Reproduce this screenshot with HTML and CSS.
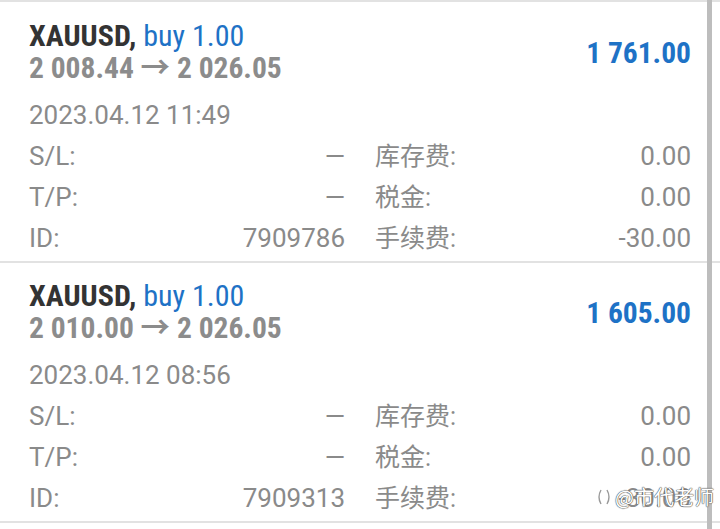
FILE: index.html
```html
<!DOCTYPE html>
<html lang="zh">
<head>
  <meta charset="UTF-8" />
  <meta name="viewport" content="width=device-width, initial-scale=1.0" />
  <title>Положення</title>
  <link rel="stylesheet" href="styles.css">
</head>
<body>
  <div class="list">
    <div class="deal">
      <div class="head">
        <div class="info">
          <div class="title">XAUUSD, <span class="side">buy 1.00</span></div>
          <div class="prices">2 008.44 → 2 026.05</div>
        </div>
        <div class="profit">1 761.00</div>
      </div>
      <div class="date">2023.04.12 11:49</div>
      <div class="grid">
        <div class="row"><span>S/L:</span><span>—</span></div>
        <div class="row"><span class="cn">库存费:</span><span>0.00</span></div>
        <div class="row"><span>T/P:</span><span>—</span></div>
        <div class="row"><span class="cn">税金:</span><span>0.00</span></div>
        <div class="row"><span>ID:</span><span>7909786</span></div>
        <div class="row"><span class="cn">手续费:</span><span>-30.00</span></div>
      </div>
    </div>
    <div class="deal">
      <div class="head">
        <div class="info">
          <div class="title">XAUUSD, <span class="side">buy 1.00</span></div>
          <div class="prices">2 010.00 → 2 026.05</div>
        </div>
        <div class="profit">1 605.00</div>
      </div>
      <div class="date">2023.04.12 08:56</div>
      <div class="grid">
        <div class="row"><span>S/L:</span><span>—</span></div>
        <div class="row"><span class="cn">库存费:</span><span>0.00</span></div>
        <div class="row"><span>T/P:</span><span>—</span></div>
        <div class="row"><span class="cn">税金:</span><span>0.00</span></div>
        <div class="row"><span>ID:</span><span>7909313</span></div>
        <div class="row"><span class="cn">手续费:</span><span>-30.00</span></div>
      </div>
    </div>
  </div>

  <div class="scrollbar"></div>

  <div class="mark">
    <svg width="16" height="18" viewBox="0 0 16 18"><path d="M5 2 Q1 9 5 16 M11 2 Q15 9 11 16" fill="none" stroke="#999" stroke-width="1.4"/></svg>
    <span>@市代老师</span>
  </div>
</body>
</html>
```

FILE: styles.css
```css
body {
  margin: 0;
  background: #ffffff;
  font-family: Roboto, "Noto Sans CJK SC", sans-serif;
  color: #8a8a8a;
  overflow: hidden;
}
.list {
  padding-top: 1px;
  border-top: 2px solid #e2e2e2;
}
.deal {
  padding: 17px 29px 2px 29px;
  border-bottom: 2px solid #e2e2e2;
}
.head {
  display: flex;
  align-items: center;
  justify-content: space-between;
}
.title, .prices, .profit {
  font-weight: bold;
  font-stretch: 87.5%;
}
.title {
  font-size: 30px;
  line-height: 32px;
  color: #333333;
}
.side {
  font-weight: normal;
  color: #1e72c6;
}
.prices {
  font-size: 29.5px;
  line-height: 33px;
  color: #8c8c8c;
}
.profit {
  font-size: 29.5px;
  color: #1e72c6;
}
.date {
  margin-top: 10px;
  font-size: 26px;
  line-height: 41px;
}
.grid {
  display: grid;
  grid-template-columns: 1fr 1fr;
  column-gap: 30px;
}
.row {
  display: flex;
  justify-content: space-between;
  font-size: 26px;
  line-height: 41px;
}
.cn {
  font-size: 25px;
}
.scrollbar {
  position: absolute;
  top: 0;
  left: 707px;
  width: 5px;
  height: 529px;
  background: #bdbdbd;
}
.mark {
  position: absolute;
  left: 596px;
  top: 482px;
  display: flex;
  align-items: center;
  gap: 3px;
  font-family: "Noto Sans CJK SC", sans-serif;
  font-size: 20px;
  color: #ffffff;
  text-shadow: 0 0 1px #555, 0 0 1px #555, 0 0 1px #555;
}
```
